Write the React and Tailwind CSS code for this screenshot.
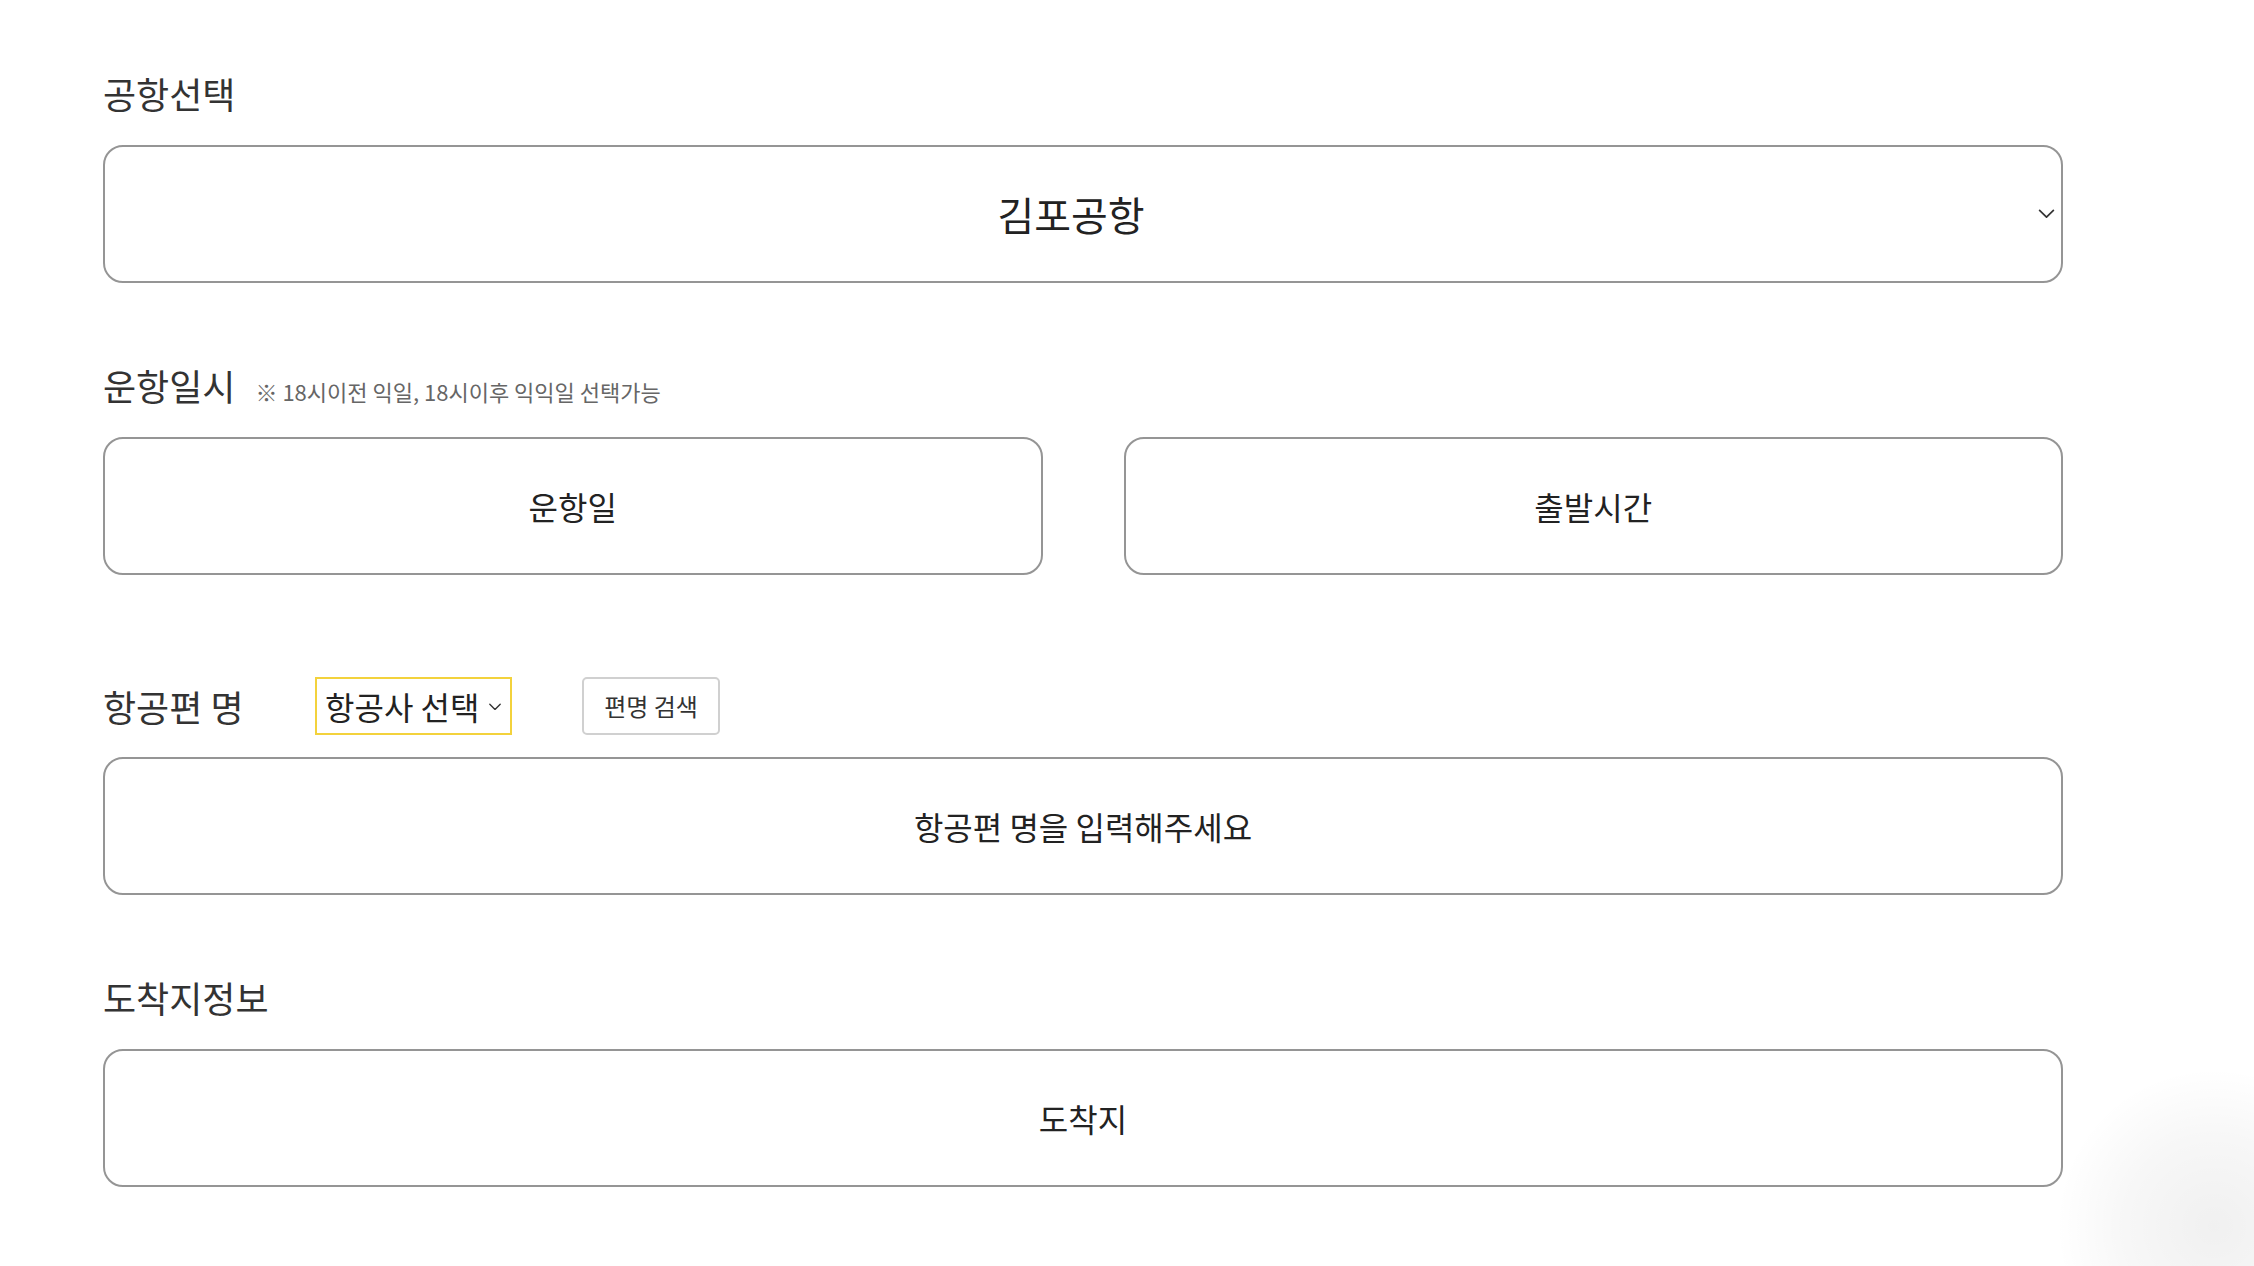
import React from "react";

const font = { fontFamily: '"Noto Sans CJK KR", "Noto Sans", sans-serif' };

function Chevron({ className, sw = "1.6" }) {
  return (
    <svg className={className} viewBox="0 0 16 10" fill="none" stroke="#333" strokeWidth={sw} strokeLinecap="round" strokeLinejoin="round">
      <path d="M1.5 1.5 L8 8 L14.5 1.5" />
    </svg>
  );
}

function Label({ children }) {
  return <div className="text-[36px] leading-[48px] text-[#333]">{children}</div>;
}

function Box({ children, className = "" }) {
  return (
    <div className={"h-[138px] rounded-[20px] border-2 border-[#959595] bg-white flex items-center justify-center text-[32px] text-[#222] " + className}>
      {children}
    </div>
  );
}

export default function App() {
  return (
    <div className="relative w-[2254px] h-[1266px] bg-white overflow-hidden" style={font}>
      <div className="ml-[103px] w-[1960px] pt-[69px] flex flex-col">
        <Label>공항선택</Label>
        <div className="mt-[28px] relative h-[138px] rounded-[20px] border-2 border-[#959595] bg-white flex items-center justify-center pr-6 text-[40px] text-[#222]">
          김포공항
          <Chevron className="absolute right-[6px] top-1/2 -translate-y-1/2 w-[17px] h-[11px]" />
        </div>

        <div className="mt-[78px] flex items-baseline">
          <Label>운항일시</Label>
          <span className="ml-[20px] text-[22px] text-[#666]">※ 18시이전 익일, 18시이후 익익일 선택가능</span>
        </div>
        <div className="mt-[28px] grid grid-cols-2 gap-[81px]">
          <Box>운항일</Box>
          <Box>출발시간</Box>
        </div>

        <div className="mt-[102px] flex items-center h-[58px]">
          <div className="w-[212px] text-[36px] leading-[48px] text-[#333]">항공편 명</div>
          <div className="h-[58px] w-[197px] border-2 border-[#f3d23c] flex items-center pl-[8px] text-[32px] text-[#222]">
            항공사 선택
            <Chevron className="ml-[9px] w-[14px] h-[8px] mt-[2px]" sw="1.7" />
          </div>
          <div className="ml-[70px] h-[58px] w-[138px] rounded-[5px] border-2 border-[#d0d0d0] flex items-center justify-center text-[24px] text-[#333]">
            편명 검색
          </div>
        </div>
        <div className="mt-[22px]">
          <Box>항공편 명을 입력해주세요</Box>
        </div>

        <div className="mt-[78px]">
          <Label>도착지정보</Label>
        </div>
        <div className="mt-[28px]">
          <Box>도착지</Box>
        </div>
      </div>
      <div
        className="absolute right-[-120px] bottom-[-120px] w-[320px] h-[320px] rounded-full pointer-events-none"
        style={{ background: "radial-gradient(circle, rgba(0,0,0,0.06) 0%, rgba(0,0,0,0.03) 40%, rgba(0,0,0,0) 70%)" }}
      />
    </div>
  );
}
